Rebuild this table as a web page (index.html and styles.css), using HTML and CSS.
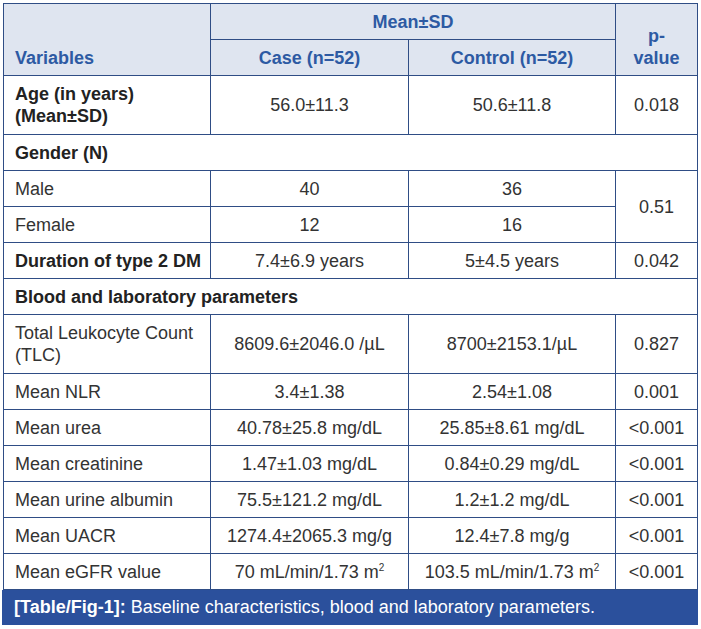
FILE: index.html
```html
<!DOCTYPE html>
<html>
<head>
<meta charset="utf-8">
<link rel="stylesheet" href="styles.css">
</head>
<body>
<div class="wrap">
<table class="tbl">
  <colgroup>
    <col class="c1"><col class="c2"><col class="c3"><col class="c4">
  </colgroup>
  <thead>
    <tr class="h1">
      <th rowspan="2" class="left">Variables</th>
      <th colspan="2">Mean±SD</th>
      <th rowspan="2">p-<br>value</th>
    </tr>
    <tr class="h2">
      <th>Case (n=52)</th>
      <th>Control (n=52)</th>
    </tr>
  </thead>
  <tbody>
    <tr class="tall">
      <td class="lab b">Age (in years)<br>(Mean±SD)</td>
      <td>56.0±11.3</td>
      <td>50.6±11.8</td>
      <td>0.018</td>
    </tr>
    <tr>
      <td class="lab b" colspan="4">Gender (N)</td>
    </tr>
    <tr>
      <td class="lab">Male</td>
      <td>40</td>
      <td>36</td>
      <td rowspan="2">0.51</td>
    </tr>
    <tr>
      <td class="lab">Female</td>
      <td>12</td>
      <td>16</td>
    </tr>
    <tr>
      <td class="lab b">Duration of type 2 DM</td>
      <td>7.4±6.9 years</td>
      <td>5±4.5 years</td>
      <td>0.042</td>
    </tr>
    <tr>
      <td class="lab b" colspan="4">Blood and laboratory parameters</td>
    </tr>
    <tr class="tall">
      <td class="lab">Total Leukocyte Count<br>(TLC)</td>
      <td>8609.6±2046.0 /µL</td>
      <td>8700±2153.1/µL</td>
      <td>0.827</td>
    </tr>
    <tr>
      <td class="lab">Mean NLR</td>
      <td>3.4±1.38</td>
      <td>2.54±1.08</td>
      <td>0.001</td>
    </tr>
    <tr>
      <td class="lab">Mean urea</td>
      <td>40.78±25.8 mg/dL</td>
      <td>25.85±8.61 mg/dL</td>
      <td>&lt;0.001</td>
    </tr>
    <tr>
      <td class="lab">Mean creatinine</td>
      <td>1.47±1.03 mg/dL</td>
      <td>0.84±0.29 mg/dL</td>
      <td>&lt;0.001</td>
    </tr>
    <tr>
      <td class="lab">Mean urine albumin</td>
      <td>75.5±121.2 mg/dL</td>
      <td>1.2±1.2 mg/dL</td>
      <td>&lt;0.001</td>
    </tr>
    <tr>
      <td class="lab">Mean UACR</td>
      <td>1274.4±2065.3 mg/g</td>
      <td>12.4±7.8 mg/g</td>
      <td>&lt;0.001</td>
    </tr>
    <tr>
      <td class="lab">Mean eGFR value</td>
      <td>70 mL/min/1.73 m<sup>2</sup></td>
      <td>103.5 mL/min/1.73 m<sup>2</sup></td>
      <td>&lt;0.001</td>
    </tr>
  </tbody>
</table>
<div class="caption"><span class="cb">[Table/Fig-1]:</span> Baseline characteristics, blood and laboratory parameters.</div>
</div>
</body>
</html>
```
FILE: styles.css
```css
html, body {
  margin: 0;
  padding: 0;
  background: #ffffff;
}
body {
  font-family: "Liberation Sans", Arial, sans-serif;
  color: #333333;
}
.wrap {
  padding: 3px 0 0 2px;
  width: 696px;
}
.tbl {
  border-collapse: collapse;
  table-layout: fixed;
  width: 695px;
  margin-left: 1px;
  font-size: 18px;
}
.c1 { width: 207px; }
.c2 { width: 198px; }
.c3 { width: 207px; }
.c4 { width: 82px; }
.tbl th, .tbl td {
  border: 1px solid #2f4d85;
  padding: 0 8px;
  height: 35px;
  line-height: 22px;
  text-align: center;
  vertical-align: middle;
  box-sizing: content-box;
}
.tbl th {
  background: #dfe5f0;
  color: #2d5aa3;
  font-weight: bold;
  vertical-align: bottom;
  padding-bottom: 6px;
  height: 29px;
}
.tbl th.left {
  text-align: left;
  padding-left: 11px;
}
.tbl tr.tall td {
  height: 58px;
}
.tbl td.lab {
  text-align: left;
  padding-left: 11px;
}
.tbl td.b {
  font-weight: bold;
  color: #222222;
}
sup {
  font-size: 10px;
  line-height: 0;
  vertical-align: 7px;
}
.caption {
  background: #2b509c;
  color: #ffffff;
  font-size: 18px;
  height: 35px;
  line-height: 35px;
  padding-left: 12px;
  width: 684px;
}
.cb {
  font-weight: bold;
}
```
